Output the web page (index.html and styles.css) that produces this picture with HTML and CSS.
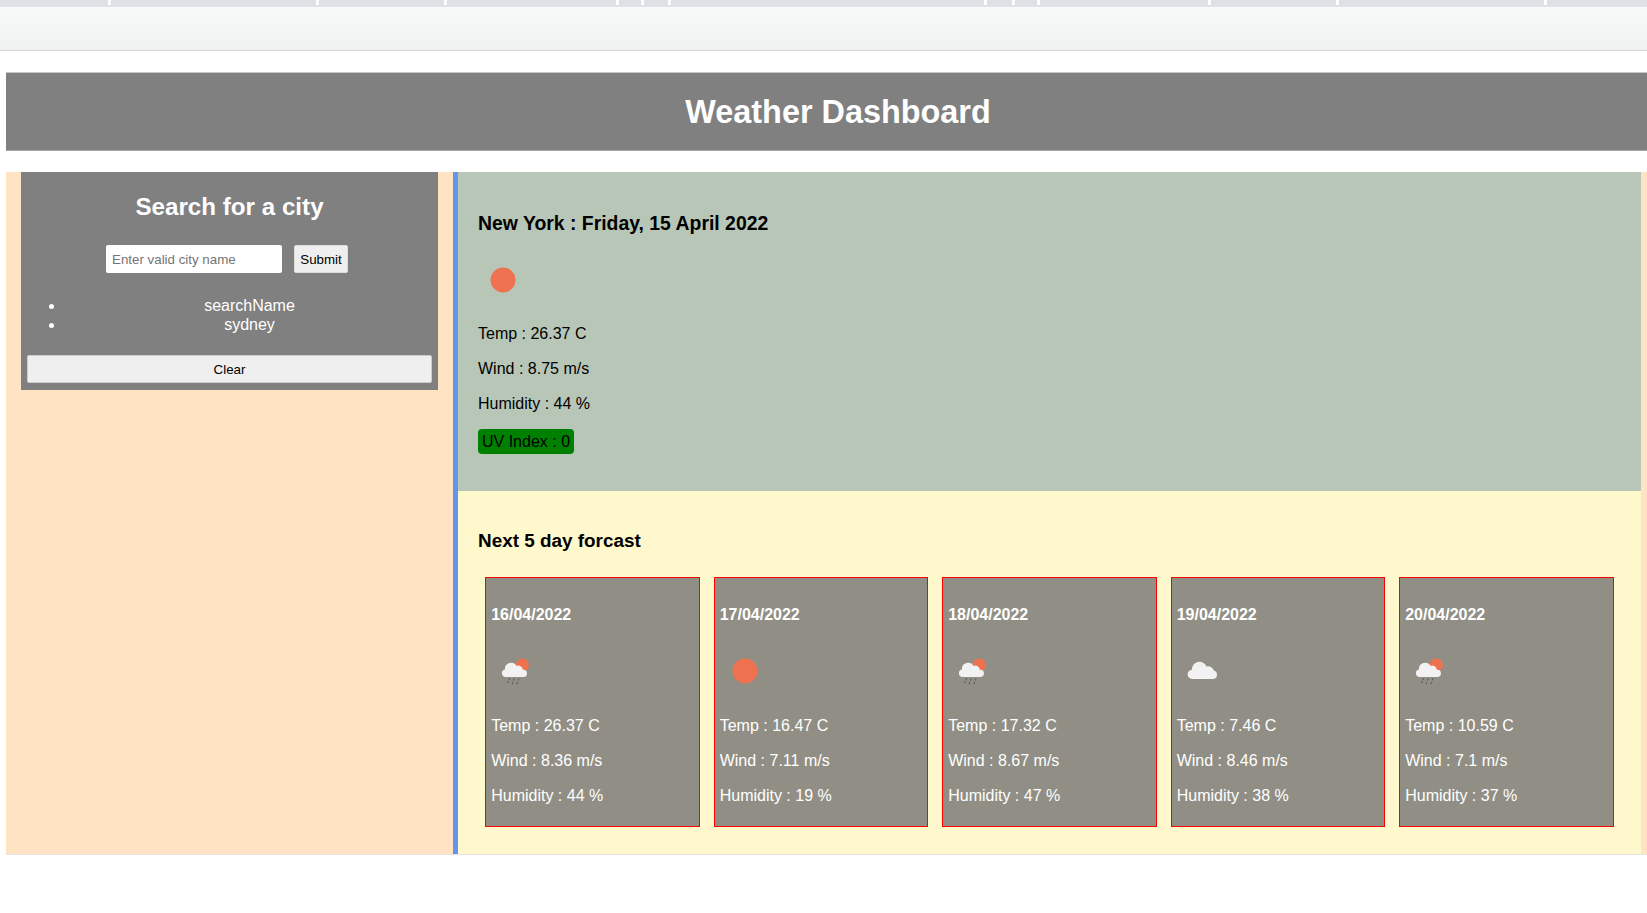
FILE: index.html
```html
<!DOCTYPE html>
<html lang="en">
<head>
  <meta charset="UTF-8">
  <title>Weather Dashboard</title>
  <meta name="viewport" content="width=device-width, initial-scale=1">
  <link rel="stylesheet" href="styles.css">
</head>
<body>
  <!-- Browser strip at the top -->
  <div class="tabs">
    <span></span><span></span><span></span><span></span><span></span><span></span><span></span>
    <span></span><span></span><span></span><span></span><span></span><span></span>
  </div>
  <div class="toolbar"></div>

  <!-- Icons used by the cards -->
  <svg class="defs" width="0" height="0">
    <symbol id="sun" viewBox="0 0 50 50">
      <circle cx="25" cy="25" r="12.5" fill="#ef7250"/>
    </symbol>
    <symbol id="rain" viewBox="0 0 50 50">
      <circle cx="31.3" cy="19" r="6.6" fill="#ef7250"/>
      <path fill="#f2f2f2" d="M14.5 31a3.8 3.8 0 0 1-.6-7.5 6.3 6.3 0 0 1 11.7-3.6 4.8 4.8 0 0 1 6.3 3.9 3.6 3.6 0 0 1 .8 7.2z"/>
      <path stroke="#5a5a5a" stroke-width="1.1" stroke-linecap="round" fill="none" d="M18.6 32.6l-.4 1.2M17 35.6l-.4 1.2M23 33l-.4 1.2M21.6 36.6l-.4 1.2M27.8 32.8l-.4 1.2M26.4 36.4l-.4 1.2"/>
    </symbol>
    <symbol id="cloud" viewBox="0 0 50 50">
      <path fill="#f2f2f2" transform="translate(1 -2)" d="M14.5 35a4.6 4.6 0 0 1-.6-9.2 7.6 7.6 0 0 1 14.6-3.3 5.8 5.8 0 0 1 7.2 4.1 4.3 4.3 0 0 1-.2 8.4z"/>
    </symbol>
  </svg>

  <header class="page-header">
    <h1>Weather Dashboard</h1>
  </header>

  <main class="layout">
    <aside class="sidebar">
      <div class="search-box">
        <h2>Search for a city</h2>
        <form class="search-form">
          <input type="text" placeholder="Enter valid city name">
          <button type="button">Submit</button>
        </form>
        <ul class="history">
          <li>searchName</li>
          <li>sydney</li>
        </ul>
        <button type="button" class="clear-btn">Clear</button>
      </div>
    </aside>

    <div class="content">
      <section class="current">
        <h3>New York : Friday, 15 April 2022</h3>
        <svg class="icon"><use href="#sun"/></svg>
        <p>Temp : 26.37 C</p>
        <p>Wind : 8.75 m/s</p>
        <p>Humidity : 44 %</p>
        <p class="uv">UV Index : 0</p>
      </section>

      <section class="forecast">
        <h3>Next 5 day forcast</h3>
        <div class="cards">
          <div class="card">
            <h4>16/04/2022</h4>
            <svg class="icon"><use href="#rain"/></svg>
            <p>Temp : 26.37 C</p>
            <p>Wind : 8.36 m/s</p>
            <p>Humidity : 44 %</p>
          </div>
          <div class="card">
            <h4>17/04/2022</h4>
            <svg class="icon"><use href="#sun"/></svg>
            <p>Temp : 16.47 C</p>
            <p>Wind : 7.11 m/s</p>
            <p>Humidity : 19 %</p>
          </div>
          <div class="card">
            <h4>18/04/2022</h4>
            <svg class="icon"><use href="#rain"/></svg>
            <p>Temp : 17.32 C</p>
            <p>Wind : 8.67 m/s</p>
            <p>Humidity : 47 %</p>
          </div>
          <div class="card">
            <h4>19/04/2022</h4>
            <svg class="icon"><use href="#cloud"/></svg>
            <p>Temp : 7.46 C</p>
            <p>Wind : 8.46 m/s</p>
            <p>Humidity : 38 %</p>
          </div>
          <div class="card">
            <h4>20/04/2022</h4>
            <svg class="icon"><use href="#rain"/></svg>
            <p>Temp : 10.59 C</p>
            <p>Wind : 7.1 m/s</p>
            <p>Humidity : 37 %</p>
          </div>
        </div>
      </section>
    </div>
  </main>
</body>
</html>
```

FILE: styles.css
```css
body {
  margin: 0;
  font-family: "Liberation Sans", Arial, sans-serif;
  font-size: 16px;
  line-height: 19px;
  color: #000;
  background: #fff;
}

/* browser strip */
.tabs {
  display: grid;
  grid-template-columns: 111px 208px 128px 172px 25px 27px 316px 28px 25px 171px 128px 208px 100px;
  height: 7px;
  background: #dee1e6;
}

.tabs span {
  height: 5px;
  border-right: 3px solid #fff;
}

.tabs span:last-child {
  border-right: none;
}

.toolbar {
  height: 43px;
  background: linear-gradient(#f8faf9, #f0f1f1);
  border-bottom: 1px solid #d5d5d5;
}

.defs {
  display: block;
  position: absolute;
}

/* title bar */
.page-header {
  display: flex;
  align-items: center;
  justify-content: center;
  box-sizing: border-box;
  height: 79px;
  margin: 21px 0 21px 6px;
  padding: 2px 0 0 23px;
  background: #808080;
  border-top: 1px solid #c8c8c8;
  border-bottom: 1px solid #a6a6a6;
}

.page-header h1 {
  margin: 0;
  font-size: 32.4px;
  line-height: 37px;
  color: #fff;
}

.layout {
  display: flex;
  margin-left: 6px;
  background: #ffe3c2;
  padding-right: 6.5px;
  border-bottom: 1px solid #e4e4e4;
}

/* left column */
.sidebar {
  width: 447px;
  flex-shrink: 0;
}

.search-box {
  margin: 0 15px;
  background: #808080;
  color: #fff;
  text-align: center;
  overflow: hidden;
}

.search-box h2 {
  margin: 21px 0 25px;
  font-size: 24.2px;
  line-height: 27px;
}

.search-form {
  display: flex;
  justify-content: center;
  gap: 12px;
  padding-right: 5px;
}

.search-form input {
  box-sizing: border-box;
  width: 176px;
  height: 28px;
  padding: 0 6px;
  border: none;
  border-radius: 2px;
  font-family: inherit;
  font-size: 13.33px;
  background: #fff;
}

.search-form button {
  box-sizing: border-box;
  width: 54px;
  height: 28px;
  padding: 0;
  border: 1px solid #ddd;
  border-radius: 2px;
  background: #efefef;
  font-family: inherit;
  font-size: 13.33px;
}

.history {
  margin: 23px 0 21px;
  padding-left: 40px;
  list-style: none;
}

.history li {
  position: relative;
}

.history li::before {
  content: "";
  position: absolute;
  left: -12px;
  top: 8px;
  width: 5px;
  height: 5px;
  border-radius: 50%;
  background: #fff;
}

.clear-btn {
  display: block;
  box-sizing: border-box;
  width: 405px;
  height: 28px;
  margin: 0 6px 7px;
  padding: 0;
  border: 1px solid #ccc;
  border-radius: 2px;
  background: #efefef;
  font-family: inherit;
  font-size: 13.33px;
}

/* right column */
.content {
  flex: 1;
  border-left: 5px solid #6495ed;
}

.content h3 {
  margin: 0;
  line-height: 21px;
}

.content p {
  margin: 0 0 16px;
}

.icon {
  display: block;
  width: 50px;
  height: 50px;
}

.current {
  padding: 41px 20px 21px;
  background: #b8c6b8;
}

.current h3 {
  font-size: 19.4px;
}

.current .icon {
  margin: 21px 0 19px;
}

.current .uv {
  display: inline-block;
  height: 25px;
  padding: 3px 4px;
  box-sizing: border-box;
  background: #008000;
  border-radius: 4px;
}

.forecast {
  padding: 39px 20px 27px;
  background: #fff8cc;
}

.forecast h3 {
  font-size: 18.9px;
}

.cards {
  display: flex;
  gap: 14px;
  margin: 26px 7px 0 7px;
}

.card {
  flex: 1;
  border: 1px solid #f00;
  padding: 0 5.2px;
  background: #918f85;
  color: #fff;
}

.card h4 {
  margin: 27px 0 22px;
  font-size: 16px;
  line-height: 19px;
}

.card .icon {
  margin-bottom: 20px;
}

.card p:last-child {
  margin-bottom: 21px;
}
```
